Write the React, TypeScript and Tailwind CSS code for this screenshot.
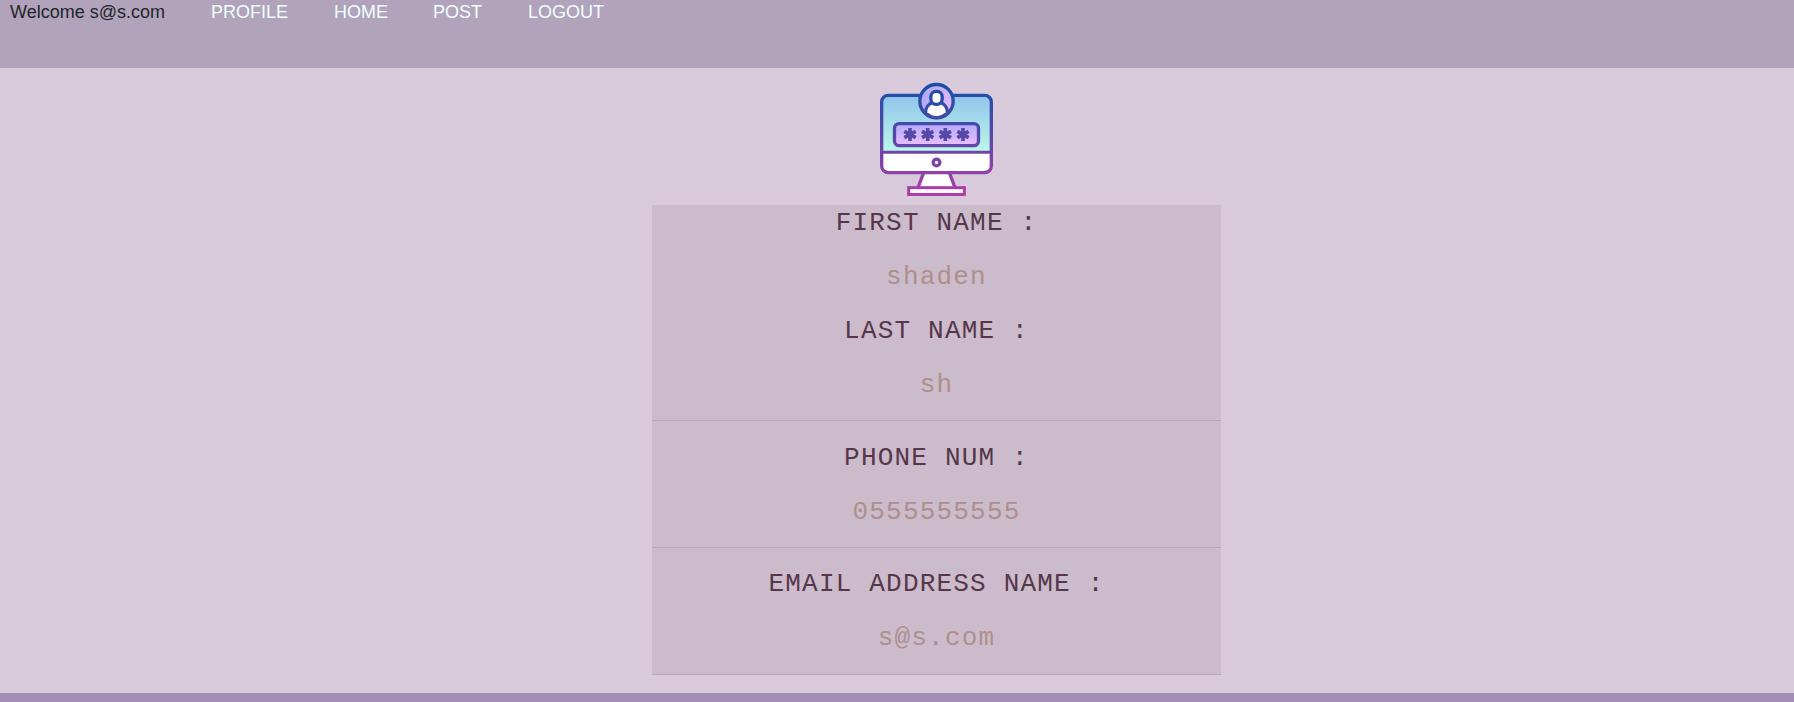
const links = [
  { label: 'PROFILE', style: 'w-[123px]' },
  { label: 'HOME', style: 'w-[99px]' },
  { label: 'POST', style: 'w-[95px]' },
  { label: 'LOGOUT', style: 'w-[90px]' },
];

function AccountIcon() {
  return (
    <svg width="133" height="135" viewBox="30 0 399 405" fill="none">
      <defs>
        <linearGradient id="line" gradientUnits="userSpaceOnUse" x1="0" y1="40" x2="0" y2="376">
          <stop offset="0" stopColor="#174fa8" />
          <stop offset="0.5" stopColor="#5b48a6" />
          <stop offset="1" stopColor="#b33ca9" />
        </linearGradient>
        <linearGradient id="screen" x1="0" y1="0" x2="0" y2="1">
          <stop offset="0" stopColor="#90c4ec" />
          <stop offset="1" stopColor="#bcf7e8" />
        </linearGradient>
        <linearGradient id="field" x1="0" y1="0" x2="0" y2="1">
          <stop offset="0" stopColor="#b3aafa" />
          <stop offset="1" stopColor="#eabfff" />
        </linearGradient>
        <linearGradient id="avatar" x1="0" y1="0.3" x2="1" y2="0.7">
          <stop offset="0" stopColor="#b0a6f8" />
          <stop offset="1" stopColor="#e2bafa" />
        </linearGradient>
      </defs>
      <path d="M65 245V94Q65 76 83 76H376Q394 76 394 94V245Z" fill="url(#screen)" />
      <path d="M65 246H394V290Q394 308 376 308H83Q65 308 65 290Z" fill="#fff" />
      <path d="M192 308H267L286 353H173Z" fill="#fff" />
      <g stroke="url(#line)" strokeWidth="10">
        <rect x="65" y="76" width="329" height="232" rx="20" />
        <path d="M65 246.5H394.1" strokeWidth="9" />
        <path d="M191 308L174 353M268 308L285 353" />
        <rect x="146" y="353" width="167" height="20.5" fill="#fff" strokeWidth="9" />
        <rect x="103.500" y="161" width="252" height="66" rx="14" fill="url(#field)" />
        <circle cx="229.500" cy="93.500" r="50" fill="url(#avatar)" />
        <path d="M197 129C196 113 206 101 219 97Q229.500 107 240 97C253 101 263 113 262 129Q247 143 229.500 143Q212 143 197 129Z" fill="#fff" />
        <rect x="212.500" y="64" width="34" height="39" rx="16" fill="#fff" />
        <circle cx="229.500" cy="277.500" r="10" fill="#fff" />
      </g>
      <g stroke="#5648a5" strokeWidth="11">
        {[150, 203, 256, 309].map((x) => (
          <path key={x} d={`M${x} 174V213M${x - 17} 184L${x + 17} 203M${x + 17} 184L${x - 17} 203`} />
        ))}
      </g>
    </svg>
  );
}

function Field({ label, value }: { label: string; value: string }) {
  return (
    <div className="whitespace-pre text-center">
      <p className="h-[54px] text-[#55364b]">{label}</p>
      <p className="h-[54px] text-[#ae8f8b]">{value}</p>
    </div>
  );
}

export default function App() {
  return (
    <div className="flex h-[702px] w-full flex-col overflow-hidden bg-[#d9cadb] font-['Liberation_Sans',sans-serif]">
      <header className="flex h-[68px] shrink-0 bg-[#b0a3bb] pl-[10px] text-[18px] leading-6">
        <span className="w-[201px] text-[#212529]">Welcome s@s.com</span>
        <nav className="flex text-[azure]">
          {links.map((l) => (
            <a key={l.label} className={l.style}>{l.label}</a>
          ))}
        </nav>
      </header>
      <main className="ml-[652px] flex w-[569px] grow flex-col">
        <div className="flex h-[137px] items-end justify-center">
          <AccountIcon />
        </div>
        <section className="bg-[#ccbbcb] font-['Liberation_Mono',monospace] text-[26px] leading-[37px] tracking-[1.2px]">
          <div className="h-[216px] border-b border-[#b8a5b7]">
            <Field label="FIRST NAME :" value="shaden" />
            <Field label="LAST NAME :" value="sh" />
          </div>
          <div className="h-[127px] border-b border-[#b8a5b7] pt-[19px]">
            <Field label="PHONE NUM :" value="0555555555" />
          </div>
          <div className="h-[127px] border-b border-[#b8a5b7] pt-[18px]">
            <Field label="EMAIL ADDRESS NAME :" value="s@s.com" />
          </div>
        </section>
      </main>
      <footer className="h-[9px] shrink-0 bg-[#a48eb5]" />
    </div>
  );
}
